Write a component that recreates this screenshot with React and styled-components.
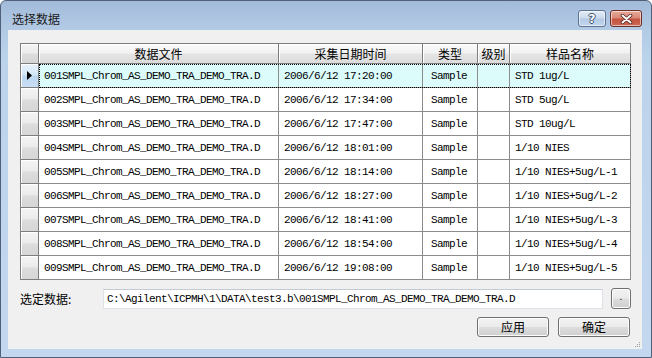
import React from "react";
import styled, { createGlobalStyle, css } from "styled-components";

const Global = createGlobalStyle`
  html, body { margin: 0; padding: 0; background: #ffffff; }
  #root { width: 652px; height: 358px; }
  * { box-sizing: border-box; }
`;

const CJK = `"Noto Sans CJK SC", "Noto Sans", sans-serif`;
const MONO = `"Liberation Mono", "Noto Sans CJK SC", monospace`;

const Window = styled.div`
  width: 652px;
  height: 358px;
  border: 1px solid #4f6078;
  border-radius: 6px 6px 0 0;
  background: linear-gradient(to bottom, #a2bbd9 0px, #b3cae5 28px, #bcd3ec 60px, #c3d8ef 100%);
  display: flex;
  flex-direction: column;
  padding: 0 9px 8px 7px;
  font-family: ${CJK};
  font-size: 12px;
  color: #000;
`;

const TitleBar = styled.div`
  height: 29px;
  display: flex;
  align-items: flex-start;
  justify-content: space-between;
  padding: 9px 0 0 4px;
`;

const Title = styled.div`
  font-family: ${CJK};
  font-size: 12px;
  line-height: 18px;
  color: #1a1a1a;
`;

const CaptionButtons = styled.div`
  display: flex;
  gap: 4px;
`;

const CaptionButton = styled.div`
  height: 17px;
  width: ${(p) => p.$w}px;
  border-radius: 3px;
  display: flex;
  align-items: center;
  justify-content: center;
  box-shadow: inset 0 0 0 1px rgba(255, 255, 255, 0.55);
  ${(p) =>
    p.$close
      ? css`
          border: 1px solid #6b2f27;
          background: linear-gradient(to bottom, #e7a99a 0%, #d98a78 45%, #c5533f 55%, #c96a55 100%);
        `
      : css`
          border: 1px solid #5d7391;
          background: linear-gradient(to bottom, #e3ecf7 0%, #ccdbee 45%, #b3c9e4 55%, #c3d6ee 100%);
        `}
`;

const HelpGlyph = styled.span`
  font-family: "DejaVu Sans", sans-serif;
  font-weight: bold;
  font-size: 12px;
  line-height: 12px;
  color: #ffffff;
  text-shadow: -1px 0 #3d4f68, 1px 0 #3d4f68, 0 -1px #3d4f68, 0 1px #3d4f68;
`;

const Client = styled.div`
  flex: 1;
  position: relative;
  background: #f0f0f0;
  padding: 13px 11px 0 12px;
  display: flex;
  flex-direction: column;
`;

const Table = styled.div`
  border-top: 1px solid #7d7d7d;
  border-left: 1px solid #7d7d7d;
  width: 611px;
  background: #f0f0f0;
`;

const Row = styled.div`
  display: flex;
  height: ${(p) => (p.$header ? 20 : 24)}px;
`;

const RowBody = styled.div`
  display: flex;
  position: relative;
  ${(p) =>
    p.$selected &&
    css`
      &::after {
        content: "";
        position: absolute;
        inset: 0 0 0 0;
        border: 1px dotted #000;
        pointer-events: none;
      }
    `}
`;

const HeaderCell = styled.div`
  width: ${(p) => p.$w}px;
  border-right: 1px solid #7d7d7d;
  border-bottom: 1px solid #7d7d7d;
  background: linear-gradient(to bottom, #fafafa 0%, #f2f2f2 45%, #e4e4e4 55%, #dcdcdc 100%);
  box-shadow: inset 1px 1px 0 #ffffff;
  display: flex;
  align-items: center;
  justify-content: center;
  font-family: ${CJK};
  font-size: 12px;
  line-height: 19px;
  white-space: nowrap;
`;

const RowHeaderCell = styled.div`
  width: 18px;
  border-right: 1px solid #7d7d7d;
  border-bottom: 1px solid #7d7d7d;
  display: flex;
  align-items: center;
  justify-content: center;
  box-shadow: inset 1px 1px 0 #ffffff;
  background: ${(p) =>
    p.$selected
      ? "linear-gradient(to bottom, #e8f2fc 0%, #d4e6f8 45%, #bcd6f0 55%, #c8def4 100%)"
      : "linear-gradient(to bottom, #f4f4f4 0%, #ececec 45%, #dcdcdc 55%, #d6d6d6 100%)"};
`;

const Cell = styled.div`
  width: ${(p) => p.$w}px;
  border-right: 1px solid #8c8c8c;
  border-bottom: 1px solid #8c8c8c;
  background: ${(p) => (p.$selected ? "#dcfcfc" : "#ffffff")};
  display: flex;
  align-items: center;
  padding-left: 5px;
  padding-top: 1px;
  font-family: ${MONO};
  font-size: 11px;
  letter-spacing: -0.6px;
  white-space: nowrap;
  overflow: hidden;
`;

const FieldRow = styled.div`
  display: flex;
  align-items: center;
  margin-top: 8px;
  height: 21px;
`;

const Label = styled.div`
  width: 83px;
  font-family: ${CJK};
  font-size: 12px;
  line-height: 20px;
`;

const TextBox = styled.div`
  width: 500px;
  height: 20px;
  background: #ffffff;
  border: 1px solid #dde2e8;
  border-top-color: #c4cad3;
  display: flex;
  align-items: center;
  padding-left: 3px;
  padding-top: 1px;
  font-family: ${MONO};
  font-size: 11px;
  letter-spacing: -0.6px;
  white-space: nowrap;
`;

const PushButton = styled.div`
  width: ${(p) => p.$w}px;
  height: ${(p) => p.$h}px;
  border: 1px solid #707070;
  border-radius: 3px;
  background: linear-gradient(to bottom, #f2f2f2 0%, #ebebeb 48%, #dddddd 52%, #cfcfcf 100%);
  box-shadow: inset 0 0 0 1px #fcfcfc;
  display: flex;
  align-items: center;
  justify-content: center;
  font-family: ${CJK};
  font-size: 12px;
  line-height: 16px;
  color: #000;
`;

const DotButton = styled(PushButton)`
  margin-left: 8px;
  font-family: "Liberation Sans", sans-serif;
  font-size: 10px;
  padding-bottom: 3px;
`;

const ButtonRow = styled.div`
  display: flex;
  justify-content: flex-end;
  gap: 9px;
  margin-top: 8px;
  padding-right: 1px;
`;

const Grip = styled.svg`
  position: absolute;
  right: 1px;
  bottom: 1px;
`;

const COLS = [
  { title: "数据文件", w: 240 },
  { title: "采集日期时间", w: 144 },
  { title: "类型", w: 55 },
  { title: "级别", w: 32 },
  { title: "样品名称", w: 121 },
];

const ROWS = [
  ["17:20:00", "STD 1ug/L"],
  ["17:34:00", "STD 5ug/L"],
  ["17:47:00", "STD 10ug/L"],
  ["18:01:00", "1/10 NIES"],
  ["18:14:00", "1/10 NIES+5ug/L-1"],
  ["18:27:00", "1/10 NIES+5ug/L-2"],
  ["18:41:00", "1/10 NIES+5ug/L-3"],
  ["18:54:00", "1/10 NIES+5ug/L-4"],
  ["19:08:00", "1/10 NIES+5ug/L-5"],
].map(([t, name], i) => ({
  file: `00${i + 1}SMPL_Chrom_AS_DEMO_TRA_DEMO_TRA.D`,
  date: `2006/6/12 ${t}`,
  type: "Sample",
  level: "",
  name,
}));

function Pointer() {
  return (
    <svg width="5" height="9" viewBox="0 0 5 9">
      <path d="M0 0 L5 4.5 L0 9 Z" fill="#000" />
    </svg>
  );
}

export default function App() {
  return (
    <>
      <Global />
      <Window>
        <TitleBar>
          <Title>选择数据</Title>
          <CaptionButtons>
            <CaptionButton $w={28}>
              <HelpGlyph>?</HelpGlyph>
            </CaptionButton>
            <CaptionButton $w={32} $close>
              <svg width="13" height="10" viewBox="0 0 13 10">
                <path d="M2.5 1.5 L10.5 8.5 M10.5 1.5 L2.5 8.5" stroke="#4a1f18" strokeWidth="3.6" strokeLinecap="round" />
                <path d="M2.5 1.5 L10.5 8.5 M10.5 1.5 L2.5 8.5" stroke="#ffffff" strokeWidth="2" strokeLinecap="round" />
              </svg>
            </CaptionButton>
          </CaptionButtons>
        </TitleBar>
        <Client>
          <Table>
            <Row $header>
              <RowHeaderCell as={HeaderCell} $w={18} />
              {COLS.map((c) => (
                <HeaderCell key={c.title} $w={c.w}>
                  {c.title}
                </HeaderCell>
              ))}
            </Row>
            {ROWS.map((r, i) => {
              const sel = i === 0;
              return (
                <Row key={i}>
                  <RowHeaderCell $selected={sel}>{sel && <Pointer />}</RowHeaderCell>
                  <RowBody $selected={sel}>
                    <Cell $w={240} $selected={sel}>{r.file}</Cell>
                    <Cell $w={144} $selected={sel}>{r.date}</Cell>
                    <Cell $w={55} $selected={sel} style={{ paddingLeft: 8 }}>{r.type}</Cell>
                    <Cell $w={32} $selected={sel}>{r.level}</Cell>
                    <Cell $w={121} $selected={sel}>{r.name}</Cell>
                  </RowBody>
                </Row>
              );
            })}
          </Table>
          <FieldRow>
            <Label>选定数据:</Label>
            <TextBox>C:\Agilent\ICPMH\1\DATA\test3.b\001SMPL_Chrom_AS_DEMO_TRA_DEMO_TRA.D</TextBox>
            <DotButton $w={20} $h={21}>.</DotButton>
          </FieldRow>
          <ButtonRow>
            <PushButton $w={72} $h={20}>应用</PushButton>
            <PushButton $w={72} $h={20}>确定</PushButton>
          </ButtonRow>
          <Grip width="7" height="7" viewBox="0 0 7 7">
            {[[5, 1], [3, 3], [5, 3], [1, 5], [3, 5], [5, 5]].map(([x, y]) => (
              <rect key={`${x}-${y}`} x={x} y={y} width="1" height="1" fill="#a0a0a0" />
            ))}
          </Grip>
        </Client>
      </Window>
    </>
  );
}
